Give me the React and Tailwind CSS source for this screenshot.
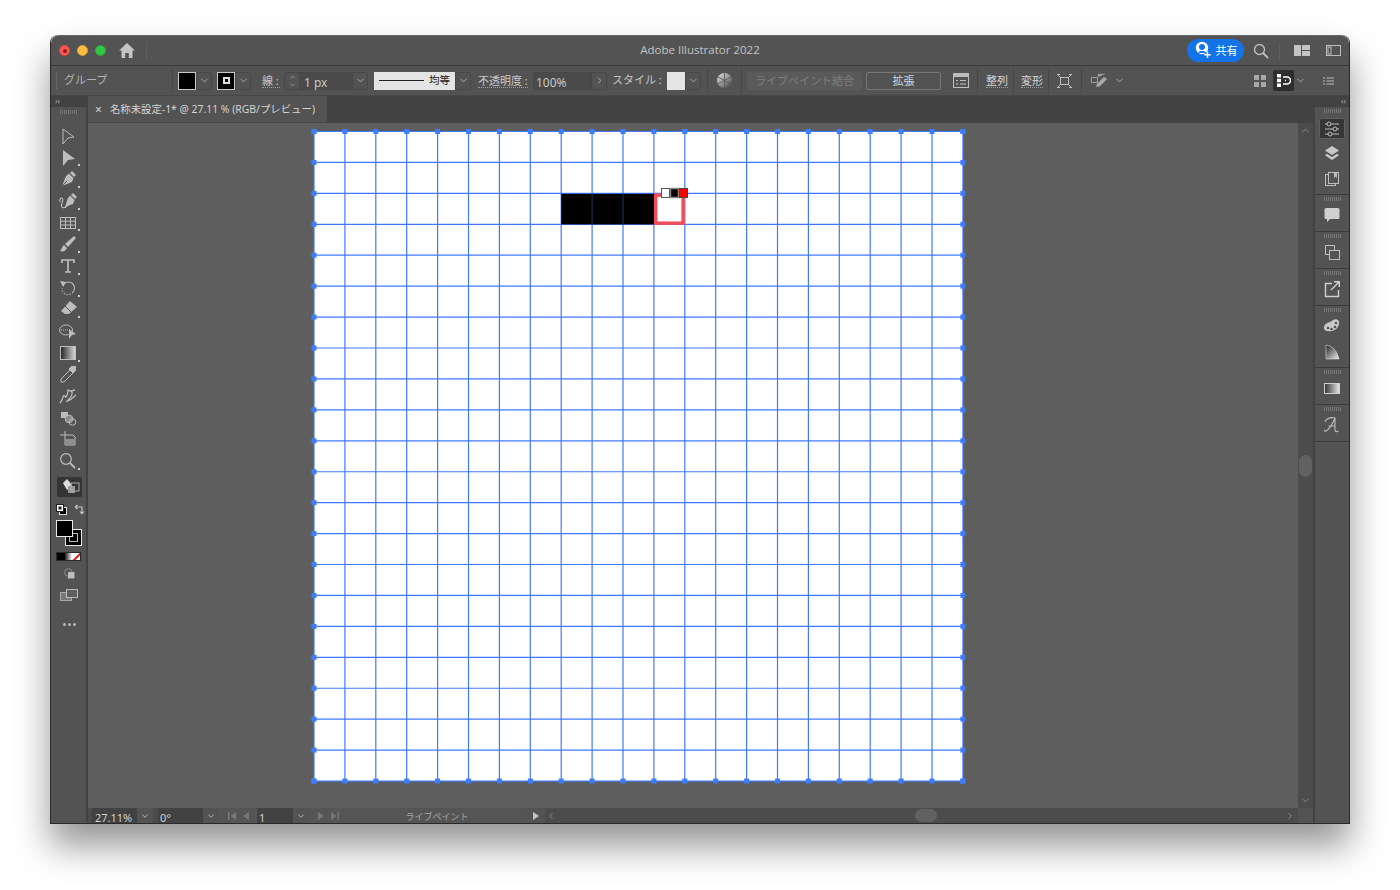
import { ChevronDown, ChevronUp, ChevronRight, ChevronLeft } from "lucide-react";

const C = "#bdbdbd";

const XS = Array.from({ length: 22 }, (_, i) => i * 30.9);
const YS = Array.from({ length: 22 }, (_, i) => i * 30.93 + 0.5);

function Dotted({ children, className = "" }) {
  return <span className={`border-b border-dotted border-[#9a9a9a] leading-[13px] whitespace-nowrap ${className}`}>{children}</span>;
}

function Chev({ className = "" }) {
  return (
    <div className={`flex items-center justify-center h-[18px] border border-[#474747] rounded-r-[3px] ${className}`}>
      <ChevronDown size={11} color="#c8c8c8" strokeWidth={1.6} />
    </div>
  );
}

function Sep({ className = "" }) {
  return <div className={`w-px h-[26px] bg-[#484848] shrink-0 ${className}`} />;
}

function Grip({ className = "" }) {
  return (
    <div className={`flex justify-center gap-[1px] h-[4px] ${className}`}>
      {Array.from({ length: 9 }, (_, i) => (
        <span key={i} className="w-px h-full bg-[#777]" />
      ))}
    </div>
  );
}

function TitleBar() {
  return (
    <div className="relative flex items-center h-[30px] bg-[#535353] border-t border-[#6a6a6a] rounded-t-[8px] shrink-0">
      <div className="flex ml-[8px] gap-[7px]">
        <span className="flex items-center justify-center w-[11px] h-[11px] rounded-full bg-[#fc5753] border border-[#df4744]">
          <span className="w-[4px] h-[4px] rounded-full bg-[#8c1c18]" />
        </span>
        <span className="w-[11px] h-[11px] rounded-full bg-[#fdbc40] border border-[#de9f34]" />
        <span className="w-[11px] h-[11px] rounded-full bg-[#33c748] border border-[#27aa35]" />
      </div>
      <svg width="16" height="15" viewBox="0 0 16 15" className="ml-[13px]">
        <path d="M8 0 L16 7.5 H13.5 V15 H9.8 V10 H6.2 V15 H2.5 V7.5 H0 Z" fill="#c4c4c4" />
      </svg>
      <div className="w-px h-[18px] bg-[#5f5f5f] ml-[11px]" />
      <div className="absolute inset-x-0 top-[6px] text-center text-[11.5px] leading-[15px] text-[#c4c4c4]" style={{ fontFamily: "'Open Sans',sans-serif" }}>Adobe Illustrator 2022</div>

      <div className="relative ml-auto -mt-[1px] flex items-center justify-center gap-[4px] w-[57px] h-[23px] rounded-full bg-[#1473e6] text-white text-[11px]">
        <svg width="18" height="18" viewBox="0 0 18 18">
          <circle cx="8" cy="7" r="6.2" fill="#fff" />
          <circle cx="8" cy="6" r="3" fill="#1473e6" />
          <path d="M3.5 12 Q8 7.5 12.5 12 Z" fill="#1473e6" />
          <path d="M13.5 10.5 V17 M10.3 13.8 H16.7" stroke="#fff" strokeWidth="1.4" />
        </svg>
        <span style={{ fontFamily: "'Noto Sans CJK JP', sans-serif" }}>共有</span>
      </div>
      <svg width="16" height="16" viewBox="0 0 16 16" className="ml-[9px]">
        <circle cx="6.5" cy="6.5" r="5" fill="none" stroke={C} strokeWidth="1.4" />
        <path d="M10 10 L15 15" stroke={C} strokeWidth="1.8" />
      </svg>
      <div className="w-px h-[18px] bg-[#5f5f5f] ml-[10px]" />
      <svg width="16" height="11" viewBox="0 0 16 11" className="ml-[14px]">
        <path d="M0 0 H7 V11 H0 Z M8 0 H16 V5 H8 Z M8 6 H16 V11 H8 Z" fill="#c4c4c4" />
      </svg>
      <svg width="15" height="11" viewBox="0 0 15 11" className="ml-[16px] mr-[8px]">
        <rect x="0.5" y="0.5" width="14" height="10" fill="none" stroke={C} />
        <rect x="2" y="2" width="3" height="7" fill="none" stroke={C} />
      </svg>
    </div>
  );
}

function ControlBar() {
  return (
    <div className="flex items-center h-[31px] bg-[#535353] border-t border-[#3a3a3a] border-b-[1px] border-b-[#474747] shrink-0 text-[11px] text-[#c8c8c8]">
      <div className="ml-[5px] w-[2px] h-[17px] border-l border-dotted border-[#777]" />
      <span className="ml-[6px] w-[41px] text-[#b5b5b5] whitespace-nowrap">グループ</span>
      <Sep className="ml-[67px]" />

      <div className="ml-[5px] w-[18px] h-[18px] bg-black border border-[#c9c9c9]" />
      <Chev className="w-[16px]" />
      <div className="ml-[5px] w-[18px] h-[18px] bg-black border border-[#c9c9c9] flex items-center justify-center">
        <span className="w-[7px] h-[7px] border-2 border-[#ddd]" />
      </div>
      <Chev className="w-[16px]" />

      <Dotted className="ml-[11px] w-[18px]">線 :</Dotted>
      <div className="ml-[4px] flex flex-col items-center justify-center w-[16px] h-[18px] border border-[#474747] rounded-l-[3px]">
        <ChevronUp size={9} color="#c8c8c8" strokeWidth={1.6} />
        <ChevronDown size={9} color="#c8c8c8" strokeWidth={1.6} />
      </div>
      <div className="w-[52px] h-[18px] bg-[#4a4a4a] border-y border-[#474747] pl-[4px] leading-[19px] text-[12px]">1 px</div>
      <Chev className="w-[16px]" />

      <div className="ml-[6px] flex items-center w-[81px] h-[18px] bg-[#e4e4e4] text-[#222] text-[10.5px]">
        <span className="ml-[5px] w-[45px] h-px bg-[#222]" />
        <span className="ml-[5px]">均等</span>
      </div>
      <Chev className="w-[16px]" />

      <Dotted className="ml-[7px] w-[50px]">不透明度 :</Dotted>
      <div className="ml-[5px] w-[58px] h-[18px] bg-[#4a4a4a] border border-[#474747] rounded-l-[3px] pl-[2px] leading-[19px] text-[12px]">100%</div>
      <div className="flex items-center justify-center w-[16px] h-[18px] border border-[#474747] rounded-r-[3px]">
        <ChevronRight size={11} color="#c8c8c8" strokeWidth={1.6} />
      </div>

      <span className="ml-[5px] w-[48px] whitespace-nowrap">スタイル :</span>
      <div className="ml-[7px] w-[18px] h-[18px] bg-[#e4e4e4]" />
      <Chev className="w-[16px]" />
      <Sep className="ml-[6px]" />
      <svg width="15" height="15" viewBox="0 0 15 15" className="ml-[9px]">
        <defs>
          <linearGradient id="globe" x1="0" y1="0" x2="1" y2="1">
            <stop offset="0" stopColor="#e0e0e0" />
            <stop offset="0.6" stopColor="#888" />
            <stop offset="1" stopColor="#333" />
          </linearGradient>
        </defs>
        <circle cx="7.5" cy="7.5" r="7.5" fill="url(#globe)" />
        <path d="M7.5 7.5 L7.5 0 M7.5 7.5 L14 4 M7.5 7.5 L14 11 M7.5 7.5 L7.5 15 M7.5 7.5 L1 11 M7.5 7.5 L1 4" stroke="#555" strokeWidth="0.8" />
      </svg>
      <Sep className="ml-[9px]" />

      <div className="ml-[5px] w-[115px] h-[18px] bg-[#5a5a5a] rounded-[2px] text-center leading-[18px] text-[#7f7f7f]">ライブペイント結合</div>
      <div className="ml-[4px] w-[75px] h-[18px] border border-[#777] rounded-[2px] text-center leading-[16px] text-[#d6d6d6]">拡張</div>

      <svg width="16" height="15" viewBox="0 0 16 15" className="ml-[12px]">
        <rect x="0.5" y="0.5" width="15" height="14" fill="none" stroke={C} />
        <rect x="1" y="1" width="14" height="3" fill={C} />
        <path d="M3 7.5 H5 M7 7.5 H13 M3 11 H5 M7 11 H13" stroke={C} />
      </svg>
      <Sep className="ml-[8px]" />
      <Dotted className="ml-[8px] w-[22px] text-[#d6d6d6]">整列</Dotted>
      <Sep className="ml-[5px]" />
      <Dotted className="ml-[7px] w-[22px] text-[#d6d6d6]">変形</Dotted>
      <Sep className="ml-[5px]" />
      <svg width="15" height="14" viewBox="0 0 15 14" className="ml-[8px]">
        <rect x="3.5" y="3.5" width="8" height="7" fill="none" stroke={C} />
        <path d="M0.5 0.5 L3 3 M14.5 0.5 L12 3 M0.5 13.5 L3 11 M14.5 13.5 L12 11 M0 0.5 H3 M12 0.5 H15 M0 13.5 H3 M12 13.5 H15" stroke={C} />
      </svg>
      <Sep className="ml-[9px]" />
      <svg width="17" height="15" viewBox="0 0 17 15" className="ml-[9px]">
        <rect x="0.5" y="4.5" width="6" height="5" fill="none" stroke="#999" />
        <path d="M7 4 V1 H14 M6 11 L13 4 L16 6 L9 13 L5 14 Z" fill="#aaa" stroke="#888" strokeWidth="0.6" />
      </svg>
      <ChevronDown size={11} color="#c8c8c8" strokeWidth={1.6} className="ml-[6px]" />

      <svg width="12" height="12" viewBox="0 0 12 12" className="ml-auto">
        <path d="M0 0 H5 V5 H0 Z M7 0 H12 V5 H7 Z M0 7 H5 V12 H0 Z M7 7 H12 V12 H7 Z" fill="#a8a8a8" />
      </svg>
      <div className="ml-[7px] flex items-center justify-center w-[21px] h-[21px] bg-[#2e2e2e] rounded-[2px]">
        <svg width="14" height="13" viewBox="0 0 14 13">
          <path d="M0 0 H4 V3.5 H0 Z M0 4.7 H4 V8.3 H0 Z M0 9.5 H4 V13 H0 Z" fill="#fff" />
          <path d="M6 3 H10 A3.4 3.4 0 0 1 10 10 H6" fill="none" stroke="#fff" strokeWidth="1.5" />
          <path d="M8 6.5 H9" stroke="#fff" strokeWidth="1.5" />
        </svg>
      </div>
      <ChevronDown size={11} color="#c8c8c8" strokeWidth={1.6} className="ml-[1px]" />
      <svg width="11" height="8" viewBox="0 0 11 8" className="ml-[17px] mr-[15px]">
        <path d="M0 1 H2 M3.5 1 H11 M0 4 H2 M3.5 4 H11 M0 7 H2 M3.5 7 H11" stroke="#bcbcbc" />
      </svg>
    </div>
  );
}

// tool icons, 20x20 viewBox, top to bottom as in the toolbar
const TOOLS = [
  <path d="M5 3 L16 11 L10 12 L5 18 Z" fill="none" stroke={C} strokeWidth="1" />,
  <path d="M5 2 L17 11 L10 12 L5 18 Z" fill={C} />,
  <g fill={C}><path d="M14 2 L18 6 L16 8 L12 4 Z" /><path d="M11 4.5 L15.5 9 L14 13 L4 17 L8 7 Z" /><path d="M4 17 L9 12" stroke="#535353" /></g>,
  <g><path d="M15 2 L19 6 L17 8 L13 4 Z M12 4.5 L16.5 9 L15 13 L7 16 L9.5 8 Z" fill={C} /><path d="M2 11 C1 5 7 6 4 12 C2 17 6 18 9 15" fill="none" stroke={C} strokeWidth="1.1" /></g>,
  <g fill="none" stroke={C}><rect x="2.5" y="4.5" width="15" height="11" /><path d="M2.5 8.2 H17.5 M2.5 12 H17.5 M7.5 4.5 V15.5 M12.5 4.5 V15.5" /></g>,
  <path d="M16 2 L18 4 L10 13 L7 10 Z M6 11 L9 14 C8 17 5 18 2 17 C4 15 4 12 6 11 Z" fill={C} />,
  <path d="M4 7 V4 H16 V7 M10 4 V16 M7 16 H13" fill="none" stroke={C} strokeWidth="1.7" />,
  <g fill="none" stroke={C} strokeWidth="1.1"><path d="M6 6 A6 6 0 0 1 15 14" /><path d="M15 14 A6 6 0 0 1 4 10" strokeDasharray="1.5 1.5" /><path d="M2 3 L5 9 L8 4 Z" fill={C} stroke="none" /></g>,
  <g><path d="M12 2 L19 8 L11 15 H7 L3 12 Z" fill={C} /><path d="M7 7 L13 13" stroke="#535353" /></g>,
  <g><ellipse cx="8" cy="9" rx="6.5" ry="5" fill="none" stroke={C} /><path d="M3 9 H12" stroke={C} strokeDasharray="1 1" /><path d="M11 8 L18 13 L14 14 L11 18 Z" fill={C} /></g>,
  <g><defs><linearGradient id="gt" x1="0" x2="1"><stop offset="0" stopColor="#222" /><stop offset="1" stopColor="#ddd" /></linearGradient></defs><rect x="2.5" y="3.5" width="15" height="13" fill="url(#gt)" stroke={C} /></g>,
  <g fill="none" stroke={C}><path d="M12 6 L15 9 L6 18 L3 18 L3 15 Z" /><path d="M11 5 L14 2 L15 3 L17 2 L18 3 L17 5 L18 6 L15 9 Z" fill={C} /></g>,
  <g fill="none" stroke={C} strokeWidth="1.3"><path d="M2 17 C6 13 4 8 7 10 C8 14 10 7 10 4 L14 6 C15 10 11 13 9 15 C12 15 14 12 18 9" /><path d="M13 5 L17 4" /></g>,
  <g><path d="M3 4 H10 V10 H3 Z" fill={C} /><circle cx="11" cy="11" r="3.8" fill="#8a8a8a" stroke={C} /><circle cx="14.5" cy="14" r="3.3" fill="none" stroke={C} /></g>,
  <g><path d="M7 2 V6 H2 M7 6 H15 L17 8 V16 H7 Z" fill="none" stroke={C} /><rect x="7" y="10" width="10" height="6" fill="#8f8f8f" /></g>,
  <g fill="none" stroke={C}><circle cx="8" cy="8" r="5.3" strokeWidth="1.2" /><path d="M12 12 L17 17" strokeWidth="1.8" /></g>,
];

function LeftToolbar() {
  return (
    <div className="flex flex-col w-[37px] bg-[#535353] border-r-2 border-[#424242] shrink-0">
      <div className="h-[11px] bg-[#424242] text-[8px] leading-[9px] pl-[4px] text-[#b0b0b0]">››</div>
      <Grip className="mt-[3px]" />
      <div className="mt-[11px] flex flex-col">
        {TOOLS.map((t, i) => (
          <div key={i} className="relative flex items-center justify-center h-[21.7px] pr-[1px]">
            <svg width="20" height="20" viewBox="0 0 20 20">{t}</svg>
            {i !== 0 && i !== 9 && i !== 11 && i !== 12 && i !== 13 && i !== 14 && (
              <span className="absolute right-[6px] bottom-[2px] w-[2px] h-[2px] bg-[#ccc]" />
            )}
          </div>
        ))}
      </div>
      <div className="ml-[6px] mt-[5px] flex items-center justify-center w-[25px] h-[20px] bg-[#353535] rounded-[2px]">
        <svg width="20" height="18" viewBox="0 0 20 18">
          <path d="M3 5 L7 1 L12 7 L7 12 Z" fill="#ddd" />
          <rect x="8" y="8" width="7" height="7" fill="#9a9a9a" />
          <rect x="11" y="5" width="8" height="8" fill="none" stroke="#aaa" />
        </svg>
      </div>
      <div className="mt-[7px] ml-[5px] flex items-center justify-between w-[29px]">
        <svg width="11" height="11" viewBox="0 0 11 11">
          <rect x="3.5" y="3.5" width="7" height="7" fill="#000" stroke="#ddd" />
          <rect x="0.5" y="0.5" width="7" height="7" fill="#fff" stroke="#222" />
          <rect x="2.5" y="2.5" width="3" height="3" fill="#222" />
        </svg>
        <svg width="11" height="11" viewBox="0 0 11 11">
          <path d="M1 3 H8 V9 M1 3 L3.5 1 M1 3 L3.5 5 M8 10 L6 7.5 M8 10 L10 7.5" fill="none" stroke="#c4c4c4" strokeWidth="1.2" />
        </svg>
      </div>
      <div className="relative ml-[5px] mt-[5px] w-[26px] h-[26px]">
        <div className="absolute left-[9px] top-[9px] w-[17px] h-[17px] bg-black border border-[#e8e8e8] flex items-center justify-center">
          <span className="w-[9px] h-[9px] border border-[#bbb]" />
        </div>
        <div className="absolute left-0 top-0 w-[17px] h-[17px] bg-black border border-[#e8e8e8]" />
      </div>
      <div className="ml-[5px] mt-[6px] flex w-[25px] h-[9px] border border-[#2a2a2a]">
        <span className="flex-1 bg-black" />
        <span className="flex-1 bg-gradient-to-r from-[#222] to-white" />
        <span className="flex-1 bg-white relative overflow-hidden">
          <span className="absolute left-[-2px] top-[3px] w-[14px] h-[2px] bg-[#e02020] -rotate-45" />
        </span>
      </div>
      <svg width="11" height="11" viewBox="0 0 11 11" className="ml-[13px] mt-[7px]">
        <circle cx="4.5" cy="4.5" r="3.8" fill="none" stroke="#8f8f8f" />
        <rect x="4" y="4" width="6.5" height="6.5" fill="#bcbcbc" />
      </svg>
      <svg width="18" height="12" viewBox="0 0 18 12" className="ml-[9px] mt-[10px]">
        <rect x="0.5" y="3.5" width="11" height="8" fill="#777" stroke="#aaa" />
        <rect x="6.5" y="0.5" width="11" height="8" fill="#5f5f5f" stroke="#bbb" />
      </svg>
      <div className="mt-[22px] ml-[12px] flex gap-[2px]">
        <span className="w-[3px] h-[3px] rounded-full bg-[#b8b8b8]" />
        <span className="w-[3px] h-[3px] rounded-full bg-[#b8b8b8]" />
        <span className="w-[3px] h-[3px] rounded-full bg-[#b8b8b8]" />
      </div>
    </div>
  );
}

function Artboard() {
  const handles = [];
  XS.forEach((x, i) => {
    handles.push([x, YS[0]], [x, YS[21]], [XS[0], YS[i]], [XS[21], YS[i]]);
  });
  return (
    <div className="ml-[226px] mt-[8px] w-[649px] h-[650px] bg-white shrink-0">
      <svg width="649" height="650" viewBox="0 0 649 650" className="block overflow-visible">
        {XS.map((x, i) => (
          <path key={`x${i}`} d={`M${x} 0 V${YS[21]}`} stroke="#3f78ff" strokeWidth="1.2" />
        ))}
        {YS.map((y, i) => (
          <path key={`y${i}`} d={`M0 ${y} H${XS[21]}`} stroke="#3f78ff" strokeWidth="1.2" />
        ))}
        <rect x={XS[8]} y={YS[2] + 0.5} width={XS[11] - XS[8]} height="30.5" fill="#000" />
        <path d={`M${XS[9]} ${YS[2]} V${YS[3]} M${XS[10]} ${YS[2]} V${YS[3]}`} stroke="#1c3470" strokeWidth="1" />
        <rect x={XS[11] + 1.8} y={YS[2] + 1.8} width="27.4" height="28" fill="#fff" stroke="#f24c58" strokeWidth="3.4" />
        {handles.map(([x, y], i) => (
          <rect key={i} x={x - 2.5} y={y - 2.5} width="5" height="5" fill="#3f7dff" />
        ))}
        <rect x="347.5" y="57.5" width="8" height="9" fill="#fff" stroke="#555" />
        <rect x="356.5" y="57.5" width="8" height="9" fill="#000" stroke="#888" strokeWidth="1.5" />
        <rect x="365.5" y="57.5" width="8" height="9" fill="#f00" stroke="#444" />
      </svg>
    </div>
  );
}

function StatusBar() {
  return (
    <div className="flex h-[15px] bg-[#4c4c4c] overflow-hidden shrink-0 text-[10px] text-[#cfcfcf]">
      <div className="ml-[4px] w-[45px] bg-[#424242] pl-[3px] leading-[19px] text-[11px]">27.11%</div>
      <div className="flex items-center justify-center w-[16px] bg-[#535353]"><ChevronDown size={10} color="#c8c8c8" /></div>
      <div className="ml-[5px] w-[45px] bg-[#424242] pl-[2px] leading-[19px] text-[11px]">0°</div>
      <div className="flex items-center justify-center w-[16px] bg-[#535353]"><ChevronDown size={10} color="#c8c8c8" /></div>
      <div className="flex items-center justify-center gap-[7px] w-[38px] bg-[#555]">
        <svg width="8" height="8" viewBox="0 0 8 8"><path d="M0 0 H1.5 V8 H0 Z M8 0 V8 L2.5 4 Z" fill="#777" /></svg>
        <svg width="6" height="8" viewBox="0 0 6 8"><path d="M6 0 V8 L0 4 Z" fill="#777" /></svg>
      </div>
      <div className="w-[36px] bg-[#424242] pl-[2px] leading-[19px] text-[11px]">1</div>
      <div className="flex items-center justify-center w-[16px] bg-[#535353]"><ChevronDown size={10} color="#c8c8c8" /></div>
      <div className="flex items-center justify-center gap-[7px] w-[38px] bg-[#555]">
        <svg width="6" height="8" viewBox="0 0 6 8"><path d="M0 0 V8 L6 4 Z" fill="#777" /></svg>
        <svg width="8" height="8" viewBox="0 0 8 8"><path d="M8 0 H6.5 V8 H8 Z M0 0 V8 L5.5 4 Z" fill="#777" /></svg>
      </div>
      <div className="flex items-start justify-center w-[180px] bg-[#555] text-[9px] text-[#a8a8a8] leading-[17px] whitespace-nowrap">ライブペイント</div>
      <div className="flex items-center justify-center w-[18px] bg-[#535353]">
        <svg width="6" height="8" viewBox="0 0 6 8"><path d="M0 0 V8 L6 4 Z" fill="#c4c4c4" /></svg>
      </div>
      <div className="relative flex items-center flex-1">
        <ChevronLeft size={10} color="#9a9a9a" className="ml-[1px]" />
        <div className="ml-[359px] w-[22px] h-[13px] rounded-full bg-[#616161]" />
        <ChevronRight size={10} color="#9a9a9a" className="ml-auto mr-[3px]" />
      </div>
      <div className="w-[15px] bg-[#535353] shrink-0" />
    </div>
  );
}

function PanelGroup({ children, className = "h-[37px]" }) {
  return (
    <div className={`flex flex-col items-center border-b border-[#3c3c3c] shrink-0 ${className}`}>
      <Grip className="mt-[2px] mb-[1px]" />
      {children}
    </div>
  );
}

function PanelIcon({ children, active }) {
  return (
    <div className={`flex items-center justify-center w-[26px] ${active ? "bg-[#353535] border border-[#5f5f5f] rounded-[2px] h-[21px]" : "h-[26px]"}`}>
      <svg width="20" height="20" viewBox="0 0 20 20">{children}</svg>
    </div>
  );
}

function RightPanel() {
  return (
    <div className="flex flex-col w-[36px] bg-[#535353] border-l-2 border-[#424242] shrink-0">
      <div className="h-[11px] bg-[#424242] text-[8px] leading-[9px] text-right pr-[3px] text-[#b0b0b0]">‹‹</div>
      <PanelGroup className="h-[88px]">
        <div className="mt-[4px] mb-[1px]">
          <PanelIcon active>
            <path d="M3 5 H17 M3 10 H17 M3 15 H17" stroke={C} />
            <circle cx="7" cy="5" r="2" fill="#353535" stroke={C} />
            <circle cx="13" cy="10" r="2" fill="#353535" stroke={C} />
            <circle cx="8" cy="15" r="2" fill="#353535" stroke={C} />
          </PanelIcon>
        </div>
        <PanelIcon>
          <path d="M10 3 L17 7.5 L10 12 L3 7.5 Z" fill="#c8c8c8" />
          <path d="M5 10.8 L3 12.2 L10 17 L17 12.2 L15 10.8 L10 14 Z" fill="#c8c8c8" />
        </PanelIcon>
        <PanelIcon>
          <rect x="3.5" y="5.5" width="10" height="11" fill="none" stroke={C} />
          <rect x="6.5" y="3.5" width="10" height="11" fill="#535353" stroke={C} />
          <path d="M12 3.5 H15 V9 L13.5 7.5 L12 9 Z" fill={C} />
        </PanelIcon>
      </PanelGroup>
      <PanelGroup>
        <PanelIcon>
          <path d="M4 3 H16 A1.5 1.5 0 0 1 17.5 4.5 V12.5 A1.5 1.5 0 0 1 16 14 H8 L5 17 V14 H4 A1.5 1.5 0 0 1 2.5 12.5 V4.5 A1.5 1.5 0 0 1 4 3 Z" fill="#cfcfcf" />
        </PanelIcon>
      </PanelGroup>
      <PanelGroup>
        <PanelIcon>
          <rect x="3.5" y="3.5" width="9" height="9" fill="none" stroke={C} />
          <rect x="7.5" y="8.5" width="10" height="9" fill="#535353" stroke={C} />
        </PanelIcon>
      </PanelGroup>
      <PanelGroup>
        <PanelIcon>
          <path d="M10 4.5 H3.5 V17.5 H16.5 V11" fill="none" stroke="#d0d0d0" strokeWidth="1.4" />
          <path d="M9 11 L17 3 M12 2.7 H17.3 V8" fill="none" stroke="#d0d0d0" strokeWidth="1.4" />
        </PanelIcon>
      </PanelGroup>
      <PanelGroup className="h-[62px]">
        <PanelIcon>
          <path d="M2 11 C3 6 8 7 11 4 C15 2 18 5 17 8 C16 13 11 16 6 15 C3 15 1.5 13 2 11 Z" fill="#c8c8c8" />
          <circle cx="6" cy="12" r="1.3" fill="#535353" />
          <circle cx="9.5" cy="13" r="1.3" fill="#535353" />
          <circle cx="13" cy="11" r="1.3" fill="#535353" />
          <circle cx="14" cy="7" r="1.3" fill="#535353" />
        </PanelIcon>
        <PanelIcon>
          <defs>
            <linearGradient id="gd" x1="0" y1="0" x2="1" y2="1"><stop offset="0" stopColor="#222" /><stop offset="1" stopColor="#eee" /></linearGradient>
          </defs>
          <path d="M4 3 C11 4 15 9 17 17 H4 Z" fill="url(#gd)" stroke="#ddd" strokeWidth="0.6" />
        </PanelIcon>
      </PanelGroup>
      <PanelGroup>
        <PanelIcon>
          <defs>
            <linearGradient id="gp" x1="0" x2="1"><stop offset="0" stopColor="#333" /><stop offset="1" stopColor="#e8e8e8" /></linearGradient>
          </defs>
          <rect x="2.5" y="5.5" width="15" height="10" fill="url(#gp)" stroke="#d0d0d0" />
        </PanelIcon>
      </PanelGroup>
      <PanelGroup>
        <PanelIcon>
          <path d="M3 7 C4 3 9 2 13 3 C11 8 8 14 4 16 C3 17 2 15 3 15 M13 3 V15 C13 17 15 17 16.5 16 M6.5 11 H13" fill="none" stroke={C} strokeWidth="1.1" />
        </PanelIcon>
      </PanelGroup>
    </div>
  );
}

export default function App() {
  return (
    <div className="w-[1400px] h-[890px] overflow-hidden bg-white" style={{ fontFamily: "'Noto Sans','Noto Sans CJK JP',sans-serif" }}>
      <div className="mt-[35px] ml-[50px] w-[1300px] h-[789px] flex flex-col rounded-t-[8px] border border-[#2a2a2a] border-t-0 shadow-[0_22px_36px_rgba(0,0,0,0.42)] overflow-hidden">
        <TitleBar />
        <ControlBar />
        <div className="flex flex-1 min-h-0">
          <LeftToolbar />
          <div className="flex flex-col flex-1 min-w-0">
            <div className="flex h-[27px] bg-[#424242] shrink-0">
              <div className="flex items-center w-[239px] bg-[#535353] border-b border-[#474747] pt-[1px] text-[10.4px] text-[#d4d4d4]">
                <span className="ml-[7px] mr-[8px] text-[12px] leading-none">×</span>
                <span className="whitespace-nowrap">名称未設定-1* @ 27.11 % (RGB/プレビュー)</span>
              </div>
            </div>
            <div className="flex flex-1 min-h-0">
              <div className="flex-1 bg-[#5e5e5e] min-w-0">
                <Artboard />
              </div>
              <div className="relative flex flex-col items-center w-[15px] bg-[#4c4c4c] shrink-0">
                <ChevronUp size={11} color="#8f8f8f" className="mt-[2px]" />
                <div className="mt-[319px] w-[13px] h-[22px] rounded-full bg-[#616161]" />
                <ChevronDown size={11} color="#8f8f8f" className="mt-auto mb-[2px]" />
              </div>
            </div>
            <StatusBar />
          </div>
          <RightPanel />
        </div>
      </div>
    </div>
  );
}
